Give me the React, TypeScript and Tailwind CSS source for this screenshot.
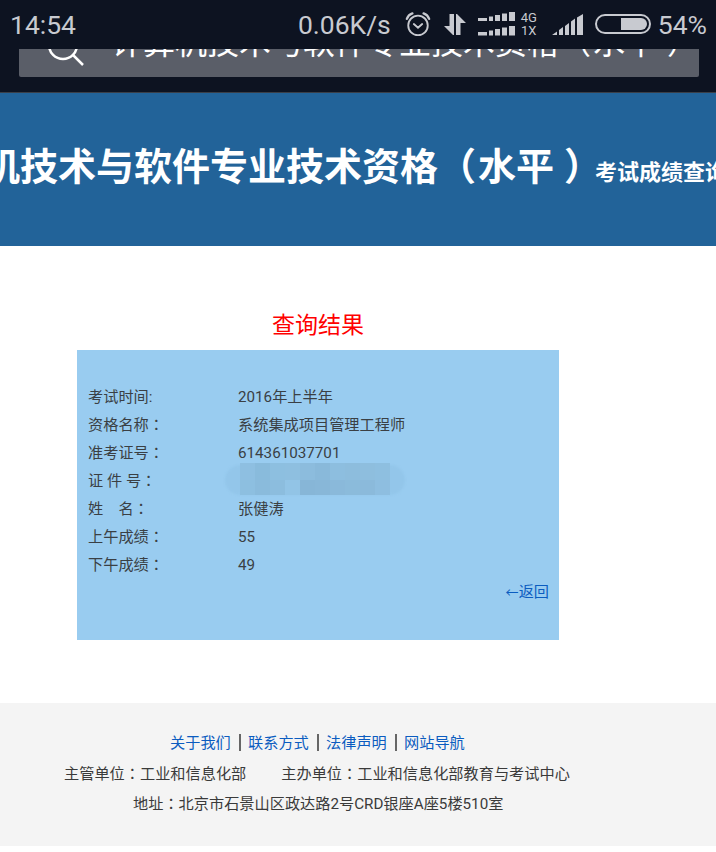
const cjk = "font-['Roboto','Noto_Sans_CJK_SC',sans-serif]"

// the page's colons sit centred in their cell, as the TC glyphs do
const tc = "font-['Noto_Sans_CJK_TC',sans-serif] leading-none"

const rows = [
  { label: '考试时间:', value: '2016年上半年' },
  { label: '资格名称', colon: true, value: '系统集成项目管理工程师' },
  { label: '准考证号', colon: true, value: '614361037701' },
  { label: '证 件 号', colon: true, value: '' },
  { label: '姓\u3000名', colon: true, value: '张健涛' },
  { label: '上午成绩', colon: true, value: '55' },
  { label: '下午成绩', colon: true, value: '49' },
]

// blurred id number, two rows of mosaic cells
const mosaicTop = ['bg-[#8ebfe1]', 'bg-[#89bbdc]', 'bg-[#8dbfe0]', 'bg-[#8ebfe0]', 'bg-[#8cbcdd]', 'bg-[#89b9da]', 'bg-[#8dbedf]', 'bg-[#8dbddd]', 'bg-[#8ebede]', 'bg-[#8ebfe0]']
const mosaicBottom = ['bg-[#8dbfe0]', 'bg-[#8abbdc]', 'bg-[#8cbdde]', 'bg-[#92c4e6]', 'bg-[#87b6d7]', 'bg-[#88b7d8]', 'bg-[#8ab9da]', 'bg-[#8bbbdb]', 'bg-[#8bbadb]', 'bg-[#8ebee0]']

function Colon() {
  return <span className={tc}>：</span>
}

function Alarm() {
  return (
    <svg width="26" height="26" viewBox="0 0 28 28" fill="none" stroke="#c8cad0" strokeWidth="2" strokeLinecap="round">
      <circle cx="14" cy="15.5" r="10.5" />
      <path d="M9.5 14l4.5 4 4.5-4" />
      <path d="M2 8.5C3 5.5 5 3.5 8 2.5M26 8.5C25 5.5 23 3.5 20 2.5" strokeWidth="2.5" />
    </svg>
  )
}

function DataArrows() {
  return (
    <svg width="22" height="21" viewBox="0 0 22 21" fill="#c8cad0">
      <path d="M5.5 0h4.5v21h-1l-9-9h5.5zM12 0h1l9 9h-5.5v12h-4.5z" />
    </svg>
  )
}

function DualSignal() {
  const bars = [
    { x: 0, w: 9 },
    { x: 11, w: 4 },
    { x: 17, w: 5 },
    { x: 24, w: 5 },
    { x: 31, w: 6 },
  ]
  return (
    <svg width="37" height="24" viewBox="0 0 37 24" fill="#c8cad0">
      {bars.map((b, i) => (
        <rect key={i} x={b.x} y={6 - i * 1.5} width={b.w} height={3 + i * 1.5} />
      ))}
      {bars.map((b, i) => (
        <rect key={i} x={b.x} y={20 - i * 1.5} width={b.w} height={3.5 + i * 1.5} />
      ))}
    </svg>
  )
}

function Signal() {
  return (
    <svg width="31" height="21" viewBox="0 0 31 21" fill="#c8cad0">
      <path d="M0 21l5-3.5v3.5zM7 16l4-3v8h-4zM13 12l4-3v12h-4zM19 7.5l4-3v16.5h-4zM25 3.5l6-3.5v21h-6z" />
    </svg>
  )
}

function Battery() {
  return (
    <div className="flex h-[20px] w-[56px] justify-end rounded-full border-2 border-[#c8cad0] p-[2px]">
      <div className="h-full w-[26px] rounded-r-full bg-[#c8cad0]" />
    </div>
  )
}

function StatusBar() {
  return (
    <div className="flex h-[49px] items-center pb-[1px] pl-[10px] pr-[9px] font-['Roboto',sans-serif] text-[26.5px] leading-none text-[#c8cad0]">
      <span className="mt-[2px]">14:54</span>
      <span className="ml-auto mt-[2px]">0.06K/s</span>
      <div className="ml-[14px]"><Alarm /></div>
      <div className="ml-[13px]"><DataArrows /></div>
      <div className="ml-[12px]"><DualSignal /></div>
      <div className="ml-[5px] flex w-[18px] flex-col items-center text-[13px] leading-[13px]">
        <span>4G</span>
        <span>1X</span>
      </div>
      <div className="ml-[14px]"><Signal /></div>
      <div className="ml-[12px]"><Battery /></div>
      <span className="ml-[7px] mt-[2px]">54%</span>
    </div>
  )
}

function SearchBox() {
  return (
    <div className="ml-[19px] flex h-[28px] w-[680px] overflow-hidden rounded-b-[2px] bg-[#5a5e68]">
      <svg className="ml-[26px] mt-[-22px] shrink-0" width="40" height="40" viewBox="0 0 40 40" fill="none" stroke="#fff" strokeWidth="2.5">
        <circle cx="18" cy="18" r="14" />
        <path d="M28 28l10 10" />
      </svg>
      <span className={`ml-[26px] mt-[-30px] h-[48px] whitespace-nowrap text-[32px] leading-[48px] text-white ${cjk}`}>
        计算机技术与软件专业技术资格<span className="mr-[2px]">（</span>水平<span className="ml-[10px]">）</span>
      </span>
    </div>
  )
}

function Banner() {
  return (
    <div className={`flex h-[153px] items-center overflow-hidden whitespace-nowrap bg-[#226399] pb-[6px] text-white ${cjk}`}>
      <div className="ml-[-94px] flex shrink-0 items-baseline font-bold">
        <span className="text-[38px] leading-none">
          计算机技术与软件专业技术资格<span className="mr-[2px]">（</span>水平<span className="ml-[10px] mr-[-10px]">）</span>
        </span>
        <span className="ml-[3px] text-[22px] leading-none">考试成绩查询</span>
      </div>
    </div>
  )
}

function ResultCard() {
  return (
    <div className={`ml-[77px] h-[290px] w-[482px] bg-[#99ccf0] pl-[11px] pr-[10px] pt-[33px] text-[15.2px] leading-[28px] text-[#3a3f44] ${cjk}`}>
      {rows.map(row => (
        <div key={row.label} className="relative flex h-[28px]">
          <span className="w-[150px] shrink-0 whitespace-pre">
            {row.label}
            {row.colon && <Colon />}
          </span>
          <span>{row.value}</span>
          {row.label.startsWith('证') && (
            <>
              <div className="absolute left-[137px] top-[-2px] h-[30px] w-[180px] rounded-full bg-[#93c6ea] blur-[1px]" />
              <div className="absolute left-[152px] top-[-4px] h-[32px] w-[150px]">
                <div className="flex h-[17px]">
                  {mosaicTop.map((c, i) => <div key={i} className={`h-full w-[15px] ${c}`} />)}
                </div>
                <div className="flex h-[15px]">
                  {mosaicBottom.map((c, i) => <div key={i} className={`h-full w-[15px] ${c}`} />)}
                </div>
              </div>
            </>
          )}
        </div>
      ))}
      <div className="mt-[-1px] flex h-[28px] items-baseline justify-end text-[#0b5cc0]">
        <a><span className="text-[13px]">←</span>返回</a>
      </div>
    </div>
  )
}

function Footer() {
  const links = ['关于我们', '联系方式', '法律声明', '网站导航']
  return (
    <div className={`mt-[63px] h-[143px] bg-[#f4f4f4] pt-[26px] text-[15.2px] text-[#3a3a3a] ${cjk}`}>
      <div className="ml-[170px] flex h-[28px] items-center">
        {links.map((l, i) => (
          <div key={l} className="flex items-center">
            {i > 0 && <div className="ml-[9px] mr-[7px] h-[17px] w-[2px] bg-[#666]" />}
            <a className="w-[60px] whitespace-nowrap text-[#0b5cc0]">{l}</a>
          </div>
        ))}
      </div>
      <div className="ml-[64px] mt-[3px] flex h-[28px] items-center whitespace-nowrap">
        <span>主管单位<Colon />工业和信息化部</span>
        <span className="ml-[35px]">主办单位<Colon />工业和信息化部教育与考试中心</span>
      </div>
      <div className="ml-[133px] mt-[2px] h-[28px] whitespace-nowrap leading-[28px]">
        地址<Colon />北京市石景山区政达路2号CRD银座A座5楼510室
      </div>
    </div>
  )
}

export default function App() {
  return (
    <div className="w-[716px] overflow-hidden bg-white">
      <div className="h-[93px] border-b border-[#3a3f48] bg-[#0d1321]">
        <StatusBar />
        <SearchBox />
      </div>
      <Banner />
      <h2 className={`ml-[77px] mt-[63px] h-[41px] w-[482px] text-center text-[23px] font-normal leading-[33px] text-[#ff0000] ${cjk}`}>
        查询结果
      </h2>
      <ResultCard />
      <Footer />
    </div>
  )
}
